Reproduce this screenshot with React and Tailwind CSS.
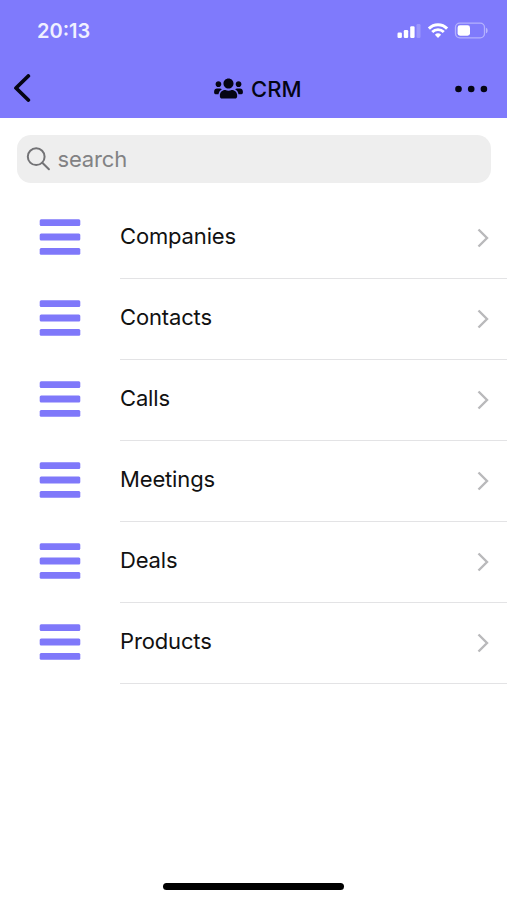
import { FaUsers } from 'react-icons/fa';

const MODULES = ['Companies', 'Contacts', 'Calls', 'Meetings', 'Deals', 'Products'];

function StatusIcons() {
    return (
        <svg width="92" height="18" viewBox="0 0 92 18" fill="white">
            {/* Signal */}
            <rect x="0.5" y="10.5" width="4.4" height="5.5" rx="1.2" />
            <rect x="6.8" y="8" width="4.4" height="8" rx="1.2" />
            <rect x="13.2" y="4.3" width="4.4" height="11.7" rx="1.2" />
            <rect x="19.5" y="2" width="4" height="14" rx="1.2" opacity="0.22" />

            {/* Wifi */}
            <g fill="none" stroke="white">
                <path d="M31.9 6.6a12.8 12.8 0 0 1 18.2 0" strokeWidth="3" />
                <path d="M35.2 10.1a8.2 8.2 0 0 1 11.6 0" strokeWidth="2.8" />
            </g>
            <path d="M37.9 12.7a4.6 4.6 0 0 1 6.2 0L41 16z" />

            {/* Battery */}
            <rect x="58.5" y="1.2" width="29" height="14.6" rx="4.3" fill="none" stroke="white" strokeWidth="1.3" opacity="0.42" />
            <path d="M89 5.7c2.2.8 2.2 4.8 0 5.6z" opacity="0.45" />
            <rect x="60.6" y="3.3" width="12.4" height="10.4" rx="2.4" />
        </svg>
    );
}

function SearchIcon() {
    return (
        <svg width="24" height="24" viewBox="0 0 24 24" fill="none" stroke="#737376" strokeWidth="2" strokeLinecap="round">
            <circle cx="10.2" cy="9.7" r="8.4" />
            <path d="M16.3 15.8l6.6 6.4" />
        </svg>
    );
}

function ModuleRow({ label }) {
    return (
        <a className="flex h-[81px] pl-[39px]">
            <div className="flex w-[81px] shrink-0 items-center pb-[3px]">
                <svg width="42" height="38" viewBox="0 0 42 38" fill="#7f78fa">
                    <rect x="0.7" y="1.3" width="40.6" height="6.8" rx="1.5" />
                    <rect x="0.7" y="15.6" width="40.6" height="6.8" rx="1.5" />
                    <rect x="0.7" y="29.9" width="40.6" height="6.8" rx="1.5" />
                </svg>
            </div>
            <div className="flex flex-1 items-center justify-between border-b border-[#e3e3e5] pr-[18.5px] pb-1">
                <span className="text-[22px] leading-7 tracking-[-0.15px] text-[#111]">{label}</span>
                <svg width="12" height="20" viewBox="0 0 12 20" fill="none" stroke="#b9b9bb" strokeWidth="2.4" className="mt-1">
                    <path d="M1.5 1.5l8.5 8.5-8.5 8.5" />
                </svg>
            </div>
        </a>
    );
}

export default function App() {
    return (
        <div className="flex h-[900px] w-[507px] flex-col bg-white font-['Inter','Liberation_Sans',sans-serif]">
            <header className="h-[118px] shrink-0 bg-[#7f7afc]">
                <div className="flex h-[62px] items-center justify-between pr-[18px] pl-[37px]">
                    <span className="text-[20px] font-semibold text-[#f0f0ff]">20:13</span>
                    <StatusIcons />
                </div>
                <div className="flex h-[52px] items-center justify-between pr-[19.5px] pl-[13px]">
                    <svg width="18" height="28" viewBox="0 0 18 28" fill="none" stroke="#050514" strokeWidth="3.8" strokeLinecap="round" strokeLinejoin="round">
                        <path d="M15.3 2L3 14l12.3 12" />
                    </svg>
                    <div className="ml-[30px] flex items-center justify-center gap-2 text-[#050514]">
                        <FaUsers className="h-[23px] w-[29px]" />
                        <h1 className="pt-px text-[22px] leading-7 font-medium">CRM</h1>
                    </div>
                    <svg width="33" height="8" viewBox="0 0 33 8" fill="#050514" className="mt-0.5">
                        <circle cx="3.5" cy="4" r="3.3" />
                        <circle cx="16.2" cy="4" r="3.3" />
                        <circle cx="28.9" cy="4" r="3.3" />
                    </svg>
                </div>
            </header>

            <div className="mx-[16.5px] mt-[17px] flex h-12 shrink-0 items-center gap-[7.5px] rounded-[14px] bg-[#eeeeee] pl-[9.5px]">
                <SearchIcon />
                <span className="text-[22px] leading-7 tracking-[-0.15px] text-[#828284]">search</span>
            </div>

            <main className="mt-[15px] flex-1">
                {MODULES.map((label) => (
                    <ModuleRow key={label} label={label} />
                ))}
            </main>

            <div className="mx-auto mb-2.5 h-[7px] w-[181px] rounded-full bg-black" />
        </div>
    );
}
